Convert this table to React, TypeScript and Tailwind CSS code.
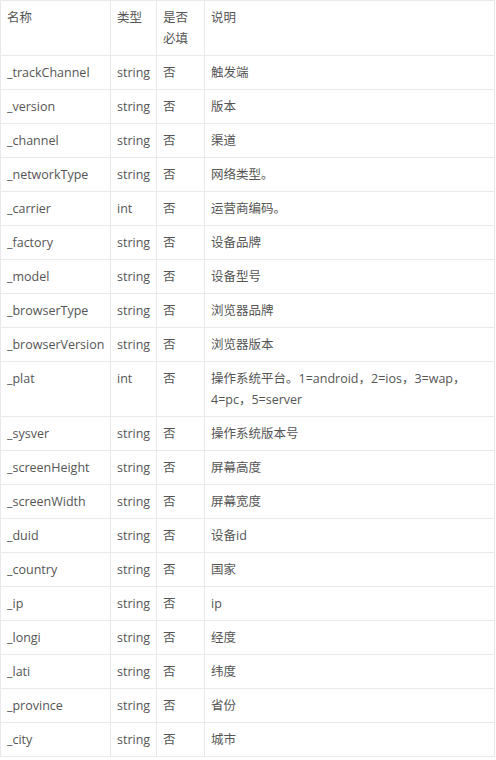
const rows: [string, string, string, string][] = [
  ["_trackChannel", "string", "否", "触发端"],
  ["_version", "string", "否", "版本"],
  ["_channel", "string", "否", "渠道"],
  ["_networkType", "string", "否", "网络类型。"],
  ["_carrier", "int", "否", "运营商编码。"],
  ["_factory", "string", "否", "设备品牌"],
  ["_model", "string", "否", "设备型号"],
  ["_browserType", "string", "否", "浏览器品牌"],
  ["_browserVersion", "string", "否", "浏览器版本"],
  ["_plat", "int", "否", "操作系统平台。1=android，2=ios，3=wap，4=pc，5=server"],
  ["_sysver", "string", "否", "操作系统版本号"],
  ["_screenHeight", "string", "否", "屏幕高度"],
  ["_screenWidth", "string", "否", "屏幕宽度"],
  ["_duid", "string", "否", "设备id"],
  ["_country", "string", "否", "国家"],
  ["_ip", "string", "否", "ip"],
  ["_longi", "string", "否", "经度"],
  ["_lati", "string", "否", "纬度"],
  ["_province", "string", "否", "省份"],
  ["_city", "string", "否", "城市"],
];

const cell = "border border-[#e9e9e9] px-[6px] py-[6px] align-top leading-[21px]";

export default function App() {
  return (
    <div className="bg-white w-[496px] min-h-[760px]" style={{ fontFamily: '"Open Sans", "Noto Sans CJK SC", sans-serif' }}>
      <table className="border-collapse text-[12.5px] text-[#555] w-[495px] table-fixed">
        <colgroup>
          <col className="w-[110px]" />
          <col className="w-[46px]" />
          <col className="w-[48px]" />
          <col />
        </colgroup>
        <thead>
          <tr>
            <th className={`${cell} text-left font-normal`}>名称</th>
            <th className={`${cell} text-left font-normal`}>类型</th>
            <th className={`${cell} text-left font-normal`}>是否<br />必填</th>
            <th className={`${cell} text-left font-normal`}>说明</th>
          </tr>
        </thead>
        <tbody>
          {rows.map((r) => (
            <tr key={r[0]}>
              {r.map((c, i) => (
                <td key={i} className={cell}>{c}</td>
              ))}
            </tr>
          ))}
        </tbody>
      </table>
    </div>
  );
}
